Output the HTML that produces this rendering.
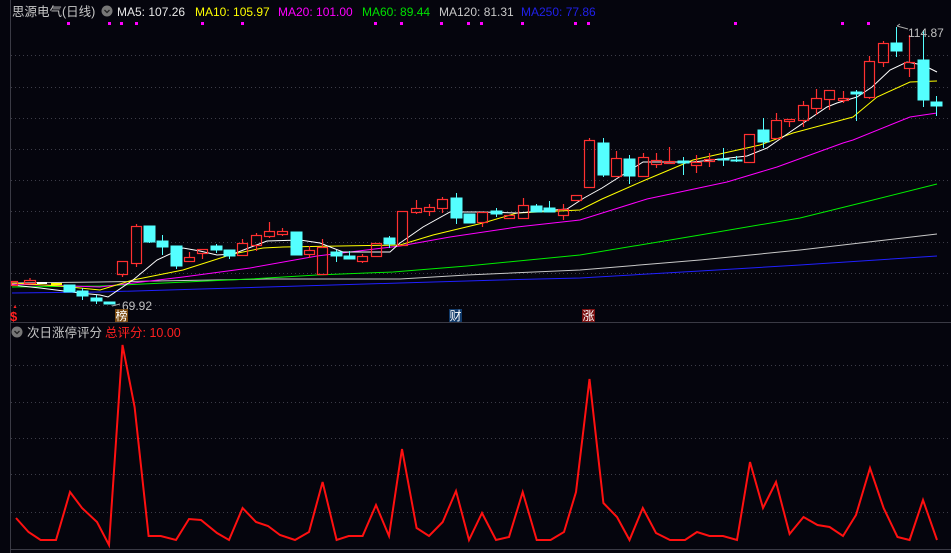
<!DOCTYPE html>
<html><head><meta charset="utf-8"><style>
html,body{margin:0;padding:0;background:#05050d;width:951px;height:553px;overflow:hidden}
svg{display:block}
text{font-family:"Liberation Sans","Noto Sans CJK SC",sans-serif}
</style></head><body>
<svg width="951" height="553" viewBox="0 0 951 553" xmlns="http://www.w3.org/2000/svg">
<rect width="951" height="553" fill="#05050d"/>
<line x1="10.5" y1="0" x2="10.5" y2="553" stroke="#3a3a44"/>
<line x1="10" y1="322.5" x2="951" y2="322.5" stroke="#3a3a44"/>
<line x1="10" y1="549.5" x2="951" y2="549.5" stroke="#3a3a44"/>
<g stroke="#3c3c48" stroke-dasharray="1,3">
<line x1="11" y1="55.5" x2="951" y2="55.5"/><line x1="11" y1="87.5" x2="951" y2="87.5"/><line x1="11" y1="118.5" x2="951" y2="118.5"/><line x1="11" y1="149.5" x2="951" y2="149.5"/><line x1="11" y1="180.5" x2="951" y2="180.5"/><line x1="11" y1="211.5" x2="951" y2="211.5"/><line x1="11" y1="242.5" x2="951" y2="242.5"/><line x1="11" y1="273.5" x2="951" y2="273.5"/><line x1="11" y1="305.5" x2="951" y2="305.5"/>
<line x1="11" y1="365.5" x2="951" y2="365.5"/><line x1="11" y1="402.5" x2="951" y2="402.5"/><line x1="11" y1="438.5" x2="951" y2="438.5"/><line x1="11" y1="474.5" x2="951" y2="474.5"/><line x1="11" y1="512.5" x2="951" y2="512.5"/>
</g>
<!-- header -->
<text x="12" y="16" font-size="12.5" fill="#c8c8c8">思源电气(日线)</text>
<circle cx="107" cy="11" r="5.5" fill="#777"/><path d="M104.5 10l2.5 2.5 2.5-2.5" stroke="#222" stroke-width="1.3" fill="none"/>
<text x="117" y="16" font-size="12" fill="#e8e8e8">MA5: 107.26</text>
<text x="195" y="16" font-size="12" fill="#ffff00">MA10: 105.97</text>
<text x="278" y="16" font-size="12" fill="#ff00ff">MA20: 101.00</text>
<text x="362" y="16" font-size="12" fill="#00e000">MA60: 89.44</text>
<text x="439" y="16" font-size="12" fill="#c8c8c8">MA120: 81.31</text>
<text x="521" y="16" font-size="12" fill="#2020e8">MA250: 77.86</text>
<g fill="#ff00ff">
<rect x="67" y="22" width="3" height="3"/><rect x="108" y="22" width="3" height="3"/><rect x="120" y="22" width="3" height="3"/><rect x="135" y="22" width="3" height="3"/><rect x="201" y="22" width="3" height="3"/><rect x="241" y="22" width="3" height="3"/><rect x="374" y="22" width="3" height="3"/><rect x="400" y="22" width="3" height="3"/><rect x="440" y="22" width="3" height="3"/><rect x="467" y="22" width="3" height="3"/><rect x="480" y="22" width="3" height="3"/><rect x="521" y="22" width="3" height="3"/><rect x="574" y="22" width="3" height="3"/><rect x="587" y="22" width="3" height="3"/><rect x="734" y="22" width="3" height="3"/><rect x="841" y="22" width="3" height="3"/><rect x="867" y="22" width="3" height="3"/>
</g>
<!-- MAs -->
<g fill="none" stroke-width="1">
<polyline stroke="#2020ff" points="12,293 100,292 267,287 400,283 500,280 580,278 700,271 800,265 937,256"/>
<polyline stroke="#c8c8c8" points="12,283 100,282 267,279 400,279 467,275 580,270 700,260 800,250 937,234"/>
<polyline stroke="#00ee00" points="12,287 100,286 250,279 317,275 393,272 467,266 580,255 700,235 800,218 873,200 937,184"/>
<polyline stroke="#ff00ff" points="12,284 100,287 183,277 250,268 317,256 400,246 450,237 517,227 580,220 647,199 727,182 777,167 843,143 853,140 910,117 937,113"/>
<polyline stroke="#ffff00" points="12,283 60,286 100,290 133,280 183,270 233,254 263,248 283,247 400,245 433,235 483,223 517,213 580,210 602,199 643,181 693,160 760,145 793,133 853,117 877,97 910,82 937,81"/>
<polyline stroke="#ffffff" points="12,285 40,288 80,293 100,295 108,297 133,280 157,260 183,248 200,251 217,255 233,254 267,241 300,240 320,243 343,252 367,252 390,252 400,243 423,227 450,212 483,212 517,213 567,209 584,198 602,188 643,162 693,162 747,156 767,148 793,130 827,107 837,103 857,97 872,87 890,70 907,62 923,65 937,72"/>
</g>
<!-- candles red (hollow) -->
<g stroke="#ff3030" fill="none" stroke-width="1.2">
<rect x="11.5" y="281.5" width="6" height="4"/>
<rect x="24.5" y="280.5" width="11" height="3"/><line x1="30" y1="278" x2="30" y2="280"/>
<path d="M122.5 276V274M149 0"/><rect x="117.5" y="261.5" width="10" height="13"/><line x1="122.5" y1="274" x2="122.5" y2="277"/>
<rect x="131.5" y="226.5" width="10" height="37"/><line x1="136.5" y1="224" x2="136.5" y2="226"/><line x1="136.5" y1="263" x2="136.5" y2="267"/>
<rect x="184.5" y="257.5" width="10" height="4"/><line x1="189.5" y1="252" x2="189.5" y2="257"/>
<rect x="197.5" y="249.5" width="10" height="4"/><line x1="202.5" y1="253" x2="202.5" y2="259"/>
<rect x="237.5" y="243.5" width="10" height="12"/><line x1="242.5" y1="239" x2="242.5" y2="243"/>
<rect x="251.5" y="235.5" width="10" height="10"/><line x1="256.5" y1="233" x2="256.5" y2="235"/><line x1="256.5" y1="245" x2="256.5" y2="251"/>
<rect x="264.5" y="231.5" width="10" height="5"/><line x1="269.5" y1="222" x2="269.5" y2="231"/><line x1="269.5" y1="236" x2="269.5" y2="238"/>
<rect x="277.5" y="231.5" width="10" height="3"/><line x1="282.5" y1="228" x2="282.5" y2="231"/><line x1="282.5" y1="234" x2="282.5" y2="236"/>
<rect x="304.5" y="250.5" width="10" height="4"/><line x1="309.5" y1="246" x2="309.5" y2="250"/><line x1="309.5" y1="254" x2="309.5" y2="258"/>
<rect x="317.5" y="247.5" width="10" height="27"/><line x1="322.5" y1="239" x2="322.5" y2="247"/>
<rect x="357.5" y="256.5" width="10" height="5"/><line x1="362.5" y1="254" x2="362.5" y2="256"/><line x1="362.5" y1="261" x2="362.5" y2="263"/>
<rect x="371.5" y="243.5" width="10" height="13"/>
<rect x="397.5" y="211.5" width="10" height="34"/>
<rect x="411.5" y="208.5" width="10" height="4"/><line x1="416.5" y1="200" x2="416.5" y2="208"/><line x1="416.5" y1="212" x2="416.5" y2="214"/>
<rect x="424.5" y="207.5" width="10" height="4"/><line x1="429.5" y1="204" x2="429.5" y2="207"/><line x1="429.5" y1="211" x2="429.5" y2="216"/>
<rect x="437.5" y="199.5" width="10" height="9"/><line x1="442.5" y1="197" x2="442.5" y2="199"/><line x1="442.5" y1="208" x2="442.5" y2="213"/>
<rect x="477.5" y="212.5" width="10" height="10"/><line x1="482.5" y1="222" x2="482.5" y2="227"/>
<rect x="504.5" y="215.5" width="10" height="3"/>
<rect x="518.5" y="205.5" width="10" height="13"/><line x1="523.5" y1="198" x2="523.5" y2="205"/>
<rect x="558.5" y="209.5" width="10" height="6"/><line x1="563.5" y1="204" x2="563.5" y2="209"/><line x1="563.5" y1="215" x2="563.5" y2="220"/>
<rect x="571.5" y="195.5" width="10" height="5"/>
<rect x="584.5" y="140.5" width="10" height="47"/><line x1="589.5" y1="138" x2="589.5" y2="140"/>
<rect x="611.5" y="158.5" width="10" height="18"/><line x1="616.5" y1="151" x2="616.5" y2="158"/>
<rect x="638.5" y="157.5" width="10" height="19"/><line x1="643.5" y1="153" x2="643.5" y2="157"/>
<rect x="651.5" y="160.5" width="10" height="4"/><line x1="656.5" y1="153" x2="656.5" y2="160"/><line x1="656.5" y1="165" x2="656.5" y2="168"/>
<rect x="664.5" y="161.5" width="10" height="2"/><line x1="669.5" y1="147" x2="669.5" y2="161"/>
<rect x="691.5" y="162.5" width="10" height="3"/><line x1="696.5" y1="155" x2="696.5" y2="162"/><line x1="696.5" y1="166" x2="696.5" y2="173"/>
<rect x="704.5" y="159.5" width="10" height="2"/><line x1="709.5" y1="153" x2="709.5" y2="159"/><line x1="709.5" y1="161" x2="709.5" y2="167"/>
<rect x="744.5" y="134.5" width="10" height="28"/>
<rect x="771.5" y="120.5" width="10" height="18"/><line x1="776.5" y1="113" x2="776.5" y2="120"/>
<rect x="784.5" y="119.5" width="10" height="2"/><line x1="789.5" y1="121" x2="789.5" y2="127"/>
<rect x="798.5" y="105.5" width="10" height="15"/><line x1="803.5" y1="101" x2="803.5" y2="105"/><line x1="803.5" y1="120" x2="803.5" y2="127"/>
<rect x="811.5" y="98.5" width="10" height="10"/><line x1="816.5" y1="89" x2="816.5" y2="98"/><line x1="816.5" y1="108" x2="816.5" y2="115"/>
<rect x="824.5" y="90.5" width="10" height="9"/><line x1="829.5" y1="99" x2="829.5" y2="110"/>
<rect x="838.5" y="98.5" width="10" height="2"/><line x1="843.5" y1="91" x2="843.5" y2="98"/><line x1="843.5" y1="100" x2="843.5" y2="103"/>
<rect x="864.5" y="61.5" width="10" height="36"/><line x1="869.5" y1="56" x2="869.5" y2="61"/><line x1="869.5" y1="97" x2="869.5" y2="99"/>
<rect x="878.5" y="43.5" width="10" height="19"/><line x1="883.5" y1="41" x2="883.5" y2="43"/><line x1="883.5" y1="62" x2="883.5" y2="67"/>
<rect x="904.5" y="62.5" width="10" height="6"/><line x1="909.5" y1="35" x2="909.5" y2="62"/><line x1="909.5" y1="68" x2="909.5" y2="77"/>
</g>
<!-- candles cyan (filled) -->
<g fill="#54ffff" stroke="#54ffff" stroke-width="1">
<rect x="64" y="285" width="11" height="7"/>
<rect x="77" y="291" width="11" height="5"/><line x1="82.5" y1="288" x2="82.5" y2="300"/>
<rect x="91" y="298" width="11" height="3"/><line x1="96.5" y1="295" x2="96.5" y2="304"/>
<rect x="104" y="302" width="11" height="2"/>
<rect x="144" y="226" width="11" height="16"/><line x1="149.5" y1="242" x2="149.5" y2="243"/>
<rect x="157" y="241" width="11" height="6"/><line x1="162.5" y1="235" x2="162.5" y2="255"/>
<rect x="171" y="246" width="11" height="20"/><line x1="176.5" y1="264" x2="176.5" y2="269"/>
<rect x="211" y="246" width="11" height="4"/><line x1="216.5" y1="244" x2="216.5" y2="253"/>
<rect x="224" y="250" width="11" height="6"/><line x1="229.5" y1="255" x2="229.5" y2="259"/>
<rect x="291" y="232" width="11" height="23"/>
<rect x="331" y="252" width="11" height="4"/><line x1="336.5" y1="250" x2="336.5" y2="262"/>
<rect x="344" y="256" width="11" height="3"/><line x1="349.5" y1="251" x2="349.5" y2="256"/>
<rect x="384" y="238" width="11" height="6"/><line x1="389.5" y1="236" x2="389.5" y2="248"/>
<rect x="451" y="198" width="11" height="20"/><line x1="456.5" y1="193" x2="456.5" y2="224"/>
<rect x="464" y="214" width="11" height="9"/>
<rect x="491" y="211" width="11" height="3"/><line x1="496.5" y1="208" x2="496.5" y2="217"/>
<rect x="531" y="206" width="11" height="6"/><line x1="536.5" y1="204" x2="536.5" y2="206"/>
<rect x="544" y="208" width="11" height="4"/><line x1="549.5" y1="201" x2="549.5" y2="208"/>
<rect x="598" y="143" width="11" height="32"/><line x1="603.5" y1="138" x2="603.5" y2="177"/>
<rect x="624" y="159" width="11" height="17"/><line x1="629.5" y1="155" x2="629.5" y2="184"/>
<rect x="678" y="161" width="11" height="2"/><line x1="683.5" y1="157" x2="683.5" y2="175"/>
<rect x="718" y="159" width="11" height="1"/><line x1="723.5" y1="148" x2="723.5" y2="166"/>
<rect x="731" y="160" width="11" height="1"/><line x1="736.5" y1="156" x2="736.5" y2="162"/>
<rect x="758" y="130" width="11" height="12"/><line x1="763.5" y1="118" x2="763.5" y2="148"/>
<rect x="851" y="92" width="11" height="2"/><line x1="856.5" y1="90" x2="856.5" y2="121"/>
<rect x="891" y="43" width="11" height="8"/><line x1="896.5" y1="27" x2="896.5" y2="57"/>
<rect x="918" y="60" width="11" height="40"/><line x1="923.5" y1="30" x2="923.5" y2="107"/>
<rect x="931" y="102" width="11" height="4"/><line x1="936.5" y1="96" x2="936.5" y2="116"/>
</g>
<g fill="#ffffff"><rect x="37" y="282" width="10" height="2"/></g><g fill="#ffff00"><rect x="51" y="283" width="11" height="2"/></g>
<!-- labels -->
<path d="M897 26l3-2 M897 26l11 3" stroke="#aaa" fill="none"/>
<text x="908" y="37" font-size="12" fill="#c0c0c0">114.87</text>
<path d="M112 306l8-2" stroke="#aaa"/>
<text x="122" y="310" font-size="12" fill="#c0c0c0">69.92</text>
<text x="10" y="321" font-size="13" fill="#ff2020" font-weight="bold">$</text>
<path d="M13.5 308l1.5-3 1.5 3z" fill="#ff2020"/>
<rect x="115" y="309" width="13" height="13" fill="#7a4a10"/><text x="115.5" y="320" font-size="12" fill="#fff">榜</text>
<rect x="449" y="309" width="13" height="13" fill="#103a6a"/><text x="449.5" y="320" font-size="12" fill="#fff">财</text>
<rect x="582" y="309" width="13" height="13" fill="#7a1010"/><text x="582.5" y="320" font-size="12" fill="#fff">涨</text>
<!-- lower panel -->
<circle cx="17" cy="332" r="5.5" fill="#777"/><path d="M14.5 331l2.5 2.5 2.5-2.5" stroke="#222" stroke-width="1.3" fill="none"/>
<text x="27" y="337" font-size="12.5" fill="#c8c8c8">次日涨停评分</text>
<text x="105" y="337" font-size="12.5" fill="#ff2020">总评分: 10.00</text>
<polyline fill="none" stroke="#ff1010" stroke-width="2" points="16,518 28.5,532 40.6,540 56,540 70,492 82,508 97,522 109,545 122.5,345 134.6,407 148.6,536 160.7,536 176,540 189,519 201,520 217,533 229,540 242.6,508 256,522 268,526 280,535 295,540 309,532 322.6,482 336.6,540 348.7,536 362.6,536 376,505 389,536 402,449 416.6,528 429,536 442.7,522 456,491 469,540 482,513 496,540 509,537 522.7,492 536.7,540 550.6,540 564,532 576,492 589.5,379 603.4,503 617,517 629.5,540 642.8,508 656,533 670,540 685,540 697,532 709.5,536 723,536 737,540 750,462 763,508 776,482 789.6,534 803.5,517 817.5,525 829.6,527 843,536 856,515 870,468 883.6,508 897.5,537 909.6,540 923,500 937,540"/>
</svg>
</body></html>
